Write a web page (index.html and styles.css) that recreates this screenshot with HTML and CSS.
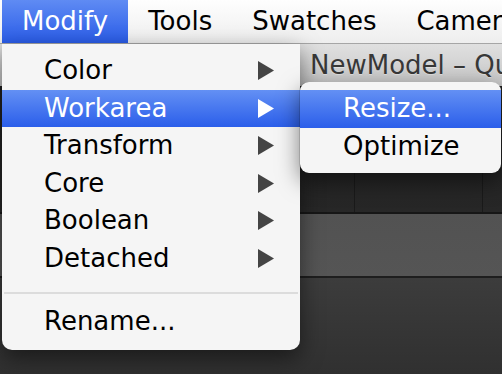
FILE: index.html
```
<!DOCTYPE html>
<html lang="en">
<head>
    <meta charset="UTF-8">
    <title>Modify menu</title>
    <link rel="stylesheet" href="styles.css">
</head>
<body>

<nav class="menubar">
    <span class="menubar-item is-open">Modify</span>
    <span class="menubar-item">Tools</span>
    <span class="menubar-item">Swatches</span>
    <span class="menubar-item">Camera</span>
</nav>

<div class="window">
    <div class="titlebar">NewModel – Quick Model</div>
    <div class="toolbar">
        <div class="tool-group tool-group-first"></div>
        <div class="tool-group tool-group-mid"></div>
        <div class="tool-group tool-group-last"></div>
    </div>
    <div class="panel"></div>
    <div class="viewport"></div>
</div>

<ul class="menu menu-main">
    <li class="menu-item"><span>Color</span><svg class="arrow" viewBox="0 0 16 19"><path d="M0 0L16 9.5L0 19Z"/></svg></li>
    <li class="menu-item is-active"><span>Workarea</span><svg class="arrow" viewBox="0 0 16 19"><path d="M0 0L16 9.5L0 19Z"/></svg></li>
    <li class="menu-item"><span>Transform</span><svg class="arrow" viewBox="0 0 16 19"><path d="M0 0L16 9.5L0 19Z"/></svg></li>
    <li class="menu-item"><span>Core</span><svg class="arrow" viewBox="0 0 16 19"><path d="M0 0L16 9.5L0 19Z"/></svg></li>
    <li class="menu-item"><span>Boolean</span><svg class="arrow" viewBox="0 0 16 19"><path d="M0 0L16 9.5L0 19Z"/></svg></li>
    <li class="menu-item"><span>Detached</span><svg class="arrow" viewBox="0 0 16 19"><path d="M0 0L16 9.5L0 19Z"/></svg></li>
    <li class="menu-sep"></li>
    <li class="menu-item"><span>Rename...</span></li>
</ul>

<ul class="menu menu-sub">
    <li class="menu-item is-active"><span>Resize...</span></li>
    <li class="menu-item"><span>Optimize</span></li>
</ul>

</body>
</html>
```

FILE: styles.css
```
body {
    font-family: "DejaVu Sans", "Liberation Sans", sans-serif;
    font-size: 26px;
    margin: 0;
    padding: 0;
    width: 502px;
    height: 374px;
    overflow: hidden;
    position: relative;
    background-color: #333;
}

/* top menu bar */
.menubar {
    display: flex;
    height: 43px;
    padding-left: 2px;
    background: linear-gradient(#fefefe, #eeeeee);
    border-bottom: 1px solid #a6a6a6;
    white-space: nowrap;
}

.menubar-item {
    padding: 0 20px;
    line-height: 43px;
    color: #000;
}

.menubar-item.is-open {
    background: linear-gradient(#5f8bf3, #2a5ce8);
    color: #fff;
}

/* the app window behind the menus */
.window {
    display: flex;
    flex-direction: column;
}

.titlebar {
    height: 42px;
    line-height: 42px;
    padding-left: 310px;
    white-space: nowrap;
    overflow: hidden;
    color: #383838;
    text-shadow: 0 1px 0 rgba(255, 255, 255, 0.4);
    background: linear-gradient(#e0e0e0, #c6c6c6);
}

.toolbar {
    display: flex;
    height: 126px;
    background: linear-gradient(#202020, #272727);
    border-bottom: 2px solid #161616;
}

.tool-group {
    border-right: 1px solid #1a1a1a;
}

.tool-group-first {
    width: 354px;
}

.tool-group-mid {
    width: 127px;
}

.tool-group-last {
    flex: 1;
    border-right: none;
}

.panel {
    height: 62px;
    background: linear-gradient(#525252, #555555);
    border-bottom: 2px solid #1e1e1e;
}

.viewport {
    height: 96px;
    background: linear-gradient(#3c3c3c, #303030);
}

/* drop-down menus */
.menu {
    list-style-type: none;
    margin: 0;
    position: absolute;
    background-color: #f5f5f5;
    box-shadow: 0 8px 22px rgba(0, 0, 0, 0.5);
}

.menu-main {
    left: 2px;
    top: 44px;
    width: 298px;
    padding: 8px 0 9px;
    border-radius: 0 0 10px 10px;
}

.menu-sub {
    left: 300px;
    top: 82px;
    width: 201px;
    padding: 8px 0;
    border-radius: 9px;
    box-shadow: -1px 0 0 rgba(0, 0, 0, 0.12), 0 8px 22px rgba(0, 0, 0, 0.5);
}

.menu-item {
    display: flex;
    align-items: center;
    justify-content: space-between;
    height: 37.5px;
    line-height: 37.5px;
    padding: 0 26px 0 42px;
    color: #000;
}

.menu-sub .menu-item {
    padding-left: 43px;
}

.menu-item.is-active {
    background: linear-gradient(#6390f4, #2b5eea);
    color: #fff;
}

.arrow {
    width: 16px;
    height: 19px;
    fill: #444;
}

.is-active .arrow {
    fill: #fff;
}

.menu-sep {
    height: 2px;
    margin: 15px 2px 9px;
    background-color: #dcdcdc;
}
```
